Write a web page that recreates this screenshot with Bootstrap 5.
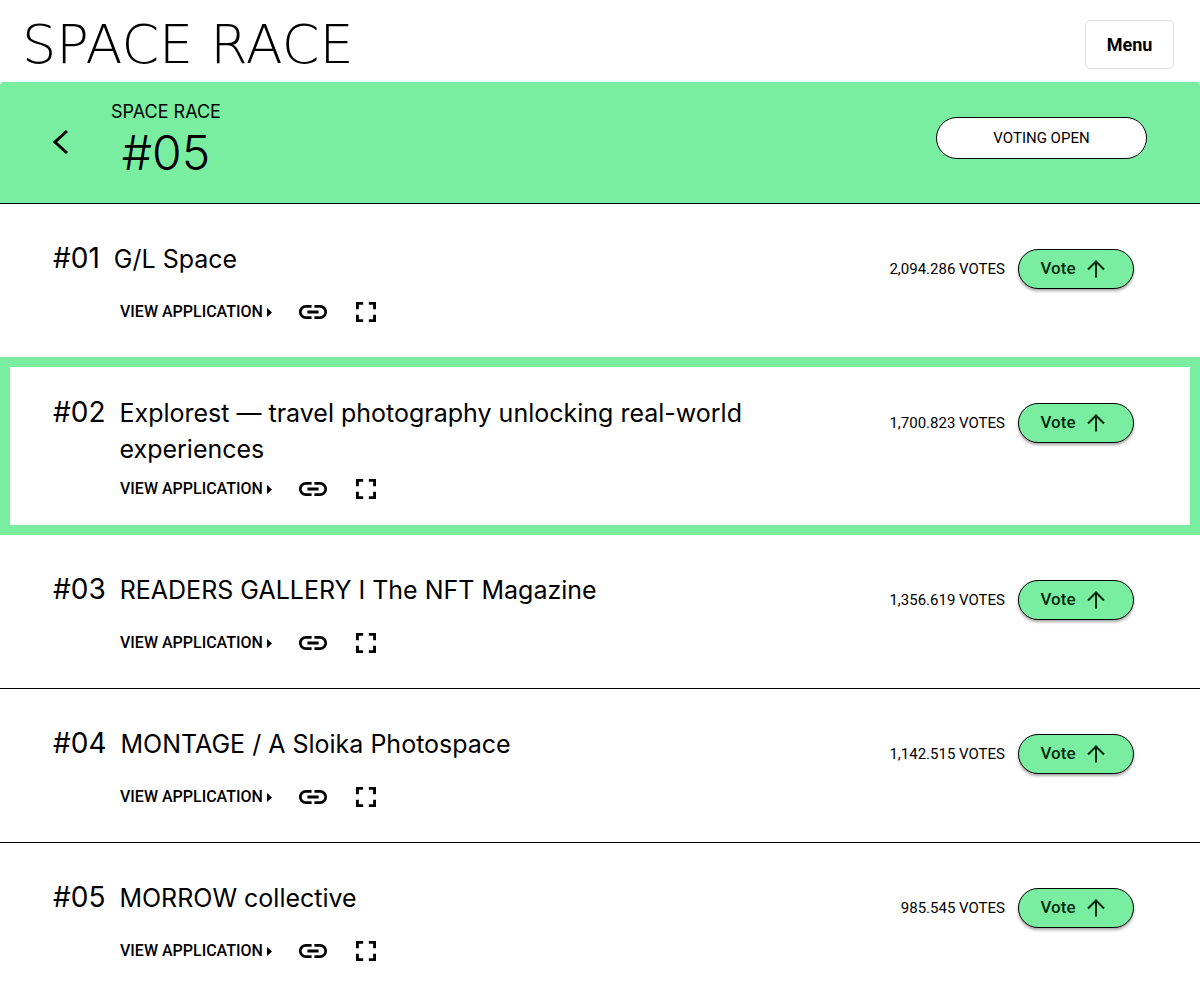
<!DOCTYPE html>
<html lang="en">
<head>
<meta charset="utf-8">
<meta name="viewport" content="width=device-width, initial-scale=1">
<title>Space Race #05</title>
<link rel="stylesheet" href="https://cdn.jsdelivr.net/npm/bootstrap@5.3.0/dist/css/bootstrap.min.css">
<style>
  :root { --mint: #79eea0; }
  body { font-family: Roboto, "Liberation Sans", sans-serif; color: #000; background: #fff; }
  a { color: inherit; text-decoration: none; }
  .site-header { height: 82px; padding: 4px 26px 0 22px; }
  .brand { font-family: "DejaVu Sans", sans-serif; font-weight: 200; font-size: 54px; line-height: 82px; white-space: nowrap; }
  .btn-menu { width: 89px; height: 49px; border: 1px solid #dedede; border-radius: 5px; font-size: 18px; font-weight: 700; color: #000; }
  .race-banner { height: 122px; padding: 0 53px; background: var(--mint); border-bottom: 1px solid #000; border-radius: 4px 4px 0 0; }
  .race-label, .race-number, .entry-title { font-family: Inter, "Liberation Sans", sans-serif; }
  .race-heading { margin-left: 40px; padding-top: 16px; }
  .race-label { font-size: 18px; line-height: 28px; }
  .race-number { font-size: 48px; line-height: 54px; font-weight: 300; }
  .back-link { width: 18px; padding-top: 46px; }
  .btn-status { width: 211px; height: 42px; margin-top: 35px; border: 1px solid #000; font-size: 15px; background: #fff; color: #000; }
  .entry { padding: 36px 66px 24px 53px; border-bottom: 1px solid #000; }
  .entry-top { min-height: 50px; }
  .entry-title { font-size: 25px; line-height: 36px; gap: 14px; max-width: 720px; }
  .entry-rank { font-size: 28px; }
  .entry-links { height: 43px; padding-left: 67px; font-size: 16px; font-weight: 500; }
  .entry-featured { position: relative; }
  .entry-featured::after { content: ""; position: absolute; inset: -1px 0 -1px 0; border: 10px solid var(--mint); pointer-events: none; }
  .link-copy { margin-left: 27px; }
  .link-expand { margin-left: 25px; }
  .icon-plain { padding: 0; border: 0; background: none; color: #000; line-height: 0; }
  .votes { gap: 13px; padding-top: 9px; font-size: 15px; }
  .btn-vote { width: 116px; height: 40px; padding: 0 7px 0 0; border: 1px solid #000; background: var(--mint); color: #042b12; font-size: 17px; font-weight: 500; box-shadow: 0 2px 3px rgba(0,0,0,.35); gap: 11px; }
</style>
</head>
<body>
<svg class="d-none" aria-hidden="true">
  <symbol id="i-link" viewBox="2 7 20 10"><path fill="currentColor" d="M3.9 12c0-1.71 1.39-3.1 3.1-3.1h4V7H7c-2.76 0-5 2.24-5 5s2.24 5 5 5h4v-1.9H7c-1.71 0-3.1-1.39-3.1-3.1zM8 13h8v-2H8v2zm9-6h-4v1.9h4c1.71 0 3.1 1.39 3.1 3.1s-1.39 3.1-3.1 3.1h-4V17h4c2.76 0 5-2.24 5-5s-2.24-5-5-5z"/></symbol>
  <symbol id="i-full" viewBox="5 5 14 14"><path fill="currentColor" d="M7 14H5v5h5v-2H7v-3zm-2-4h2V7h3V5H5v5zm12 7h-3v2h5v-5h-2v3zM14 5v2h3v3h2V5h-5z"/></symbol>
  <symbol id="i-up" viewBox="0 0 18 18"><path fill="none" stroke="currentColor" stroke-width="2" d="M9 17.5V1.5M1 9.5l8-8 8 8"/></symbol>
  <symbol id="i-tri" viewBox="0 0 5 10"><path fill="currentColor" d="M0 1l5 4.500-5 4.500z"/></symbol>
</svg>
<header class="site-header d-flex justify-content-between">
  <a class="brand" href="#">SPACE RACE</a>
  <button class="btn btn-menu mt-3 p-0 flex-shrink-0" type="button">Menu</button>
</header>
<main>
  <section class="race-banner d-flex">
    <a class="back-link" href="#" aria-label="Back"><svg width="17" height="28" viewBox="0 0 17 28"><path d="M14 3L2 14l12 11" fill="none" stroke="#000" stroke-width="3"/></svg></a>
    <div class="race-heading text-center">
      <div class="race-label">SPACE RACE</div>
      <h1 class="race-number m-0">#05</h1>
    </div>
    <button class="btn btn-status rounded-pill ms-auto p-0" type="button">VOTING OPEN</button>
  </section>

  <article class="entry">
    <div class="entry-top d-flex justify-content-between">
      <h2 class="entry-title d-flex align-items-baseline fw-normal m-0"><span class="entry-rank">#01</span><span>G/L Space</span></h2>
      <div class="votes d-flex align-items-center align-self-start flex-shrink-0"><span>2,094.286 VOTES</span>
        <button class="btn btn-vote rounded-pill d-flex align-items-center justify-content-center" type="button">Vote <svg width="18" height="18"><use href="#i-up"/></svg></button></div>
    </div>
    <div class="entry-links d-flex align-items-center">
      <a href="#">VIEW APPLICATION <svg width="5" height="10"><use href="#i-tri"/></svg></a>
      <button class="icon-plain link-copy" type="button" aria-label="Copy link"><svg width="28" height="14"><use href="#i-link"/></svg></button>
      <button class="icon-plain link-expand" type="button" aria-label="Expand"><svg width="28" height="20"><use href="#i-full"/></svg></button>
    </div>
  </article>

  <article class="entry entry-featured">
    <div class="entry-top d-flex justify-content-between">
      <h2 class="entry-title d-flex align-items-baseline fw-normal m-0"><span class="entry-rank">#02</span><span>Explorest — travel photography unlocking real-world experiences</span></h2>
      <div class="votes d-flex align-items-center align-self-start flex-shrink-0"><span>1,700.823 VOTES</span>
        <button class="btn btn-vote rounded-pill d-flex align-items-center justify-content-center" type="button">Vote <svg width="18" height="18"><use href="#i-up"/></svg></button></div>
    </div>
    <div class="entry-links d-flex align-items-center">
      <a href="#">VIEW APPLICATION <svg width="5" height="10"><use href="#i-tri"/></svg></a>
      <button class="icon-plain link-copy" type="button" aria-label="Copy link"><svg width="28" height="14"><use href="#i-link"/></svg></button>
      <button class="icon-plain link-expand" type="button" aria-label="Expand"><svg width="28" height="20"><use href="#i-full"/></svg></button>
    </div>
  </article>

  <article class="entry">
    <div class="entry-top d-flex justify-content-between">
      <h2 class="entry-title d-flex align-items-baseline fw-normal m-0"><span class="entry-rank">#03</span><span>READERS GALLERY I The NFT Magazine</span></h2>
      <div class="votes d-flex align-items-center align-self-start flex-shrink-0"><span>1,356.619 VOTES</span>
        <button class="btn btn-vote rounded-pill d-flex align-items-center justify-content-center" type="button">Vote <svg width="18" height="18"><use href="#i-up"/></svg></button></div>
    </div>
    <div class="entry-links d-flex align-items-center">
      <a href="#">VIEW APPLICATION <svg width="5" height="10"><use href="#i-tri"/></svg></a>
      <button class="icon-plain link-copy" type="button" aria-label="Copy link"><svg width="28" height="14"><use href="#i-link"/></svg></button>
      <button class="icon-plain link-expand" type="button" aria-label="Expand"><svg width="28" height="20"><use href="#i-full"/></svg></button>
    </div>
  </article>

  <article class="entry">
    <div class="entry-top d-flex justify-content-between">
      <h2 class="entry-title d-flex align-items-baseline fw-normal m-0"><span class="entry-rank">#04</span><span>MONTAGE / A Sloika Photospace</span></h2>
      <div class="votes d-flex align-items-center align-self-start flex-shrink-0"><span>1,142.515 VOTES</span>
        <button class="btn btn-vote rounded-pill d-flex align-items-center justify-content-center" type="button">Vote <svg width="18" height="18"><use href="#i-up"/></svg></button></div>
    </div>
    <div class="entry-links d-flex align-items-center">
      <a href="#">VIEW APPLICATION <svg width="5" height="10"><use href="#i-tri"/></svg></a>
      <button class="icon-plain link-copy" type="button" aria-label="Copy link"><svg width="28" height="14"><use href="#i-link"/></svg></button>
      <button class="icon-plain link-expand" type="button" aria-label="Expand"><svg width="28" height="20"><use href="#i-full"/></svg></button>
    </div>
  </article>

  <article class="entry border-0">
    <div class="entry-top d-flex justify-content-between">
      <h2 class="entry-title d-flex align-items-baseline fw-normal m-0"><span class="entry-rank">#05</span><span>MORROW collective</span></h2>
      <div class="votes d-flex align-items-center align-self-start flex-shrink-0"><span>985.545 VOTES</span>
        <button class="btn btn-vote rounded-pill d-flex align-items-center justify-content-center" type="button">Vote <svg width="18" height="18"><use href="#i-up"/></svg></button></div>
    </div>
    <div class="entry-links d-flex align-items-center">
      <a href="#">VIEW APPLICATION <svg width="5" height="10"><use href="#i-tri"/></svg></a>
      <button class="icon-plain link-copy" type="button" aria-label="Copy link"><svg width="28" height="14"><use href="#i-link"/></svg></button>
      <button class="icon-plain link-expand" type="button" aria-label="Expand"><svg width="28" height="20"><use href="#i-full"/></svg></button>
    </div>
  </article>
</main>
<script src="https://cdn.jsdelivr.net/npm/bootstrap@5.3.0/dist/js/bootstrap.bundle.min.js"></script>
</body>
</html>
